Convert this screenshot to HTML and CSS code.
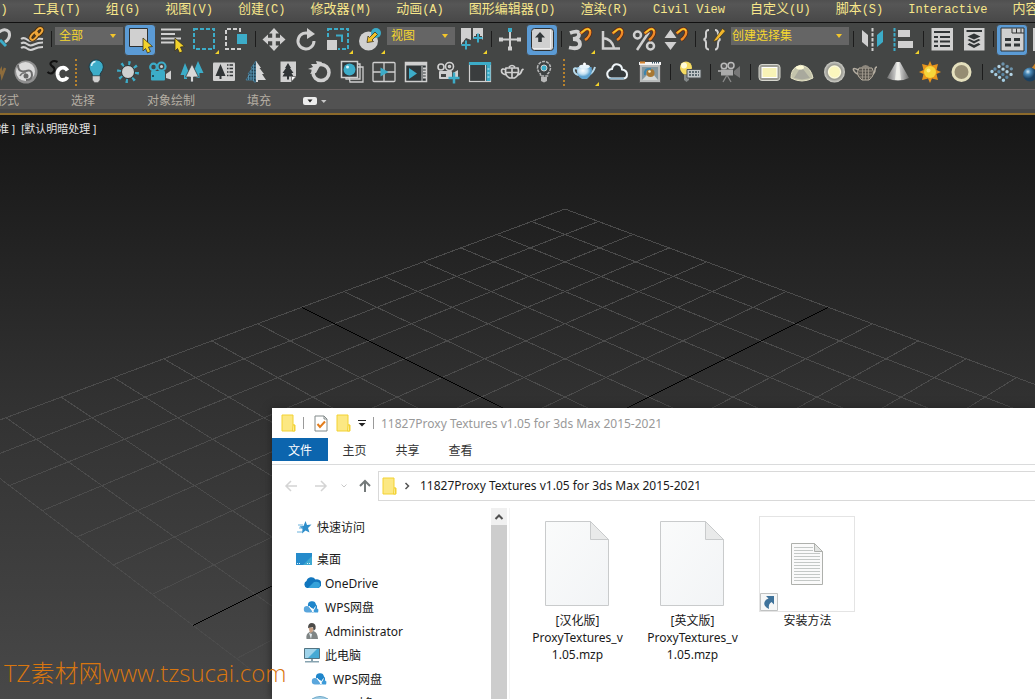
FILE: index.html
```html
<!DOCTYPE html>
<html lang="zh-CN">
<head>
<meta charset="utf-8">
<title>3ds Max</title>
<link rel="stylesheet" href="styles.css">
</head>
<body>
<svg class="defs" aria-hidden="true">
  <defs>
    <symbol id="flyout" viewBox="0 0 32 32"><path d="M31 26v4h-4z" fill="#f2d22b"/></symbol>
    <symbol id="cursor" viewBox="0 0 32 32"><path d="M19 14l9.500 8.500-4 .5 2 4.500-3 1.500-2-4.500-2.500 2.500z" fill="#f2d22b" stroke="#3a3420" stroke-width=".8"/></symbol>
    <symbol id="magnet" viewBox="0 0 32 32"><path d="M16.500 9.500L21.500 5.500Q25 4 26 7T23 14.500L21 16" fill="none" stroke="#5a2a12" stroke-width="4"/><path d="M16.500 9.500L21.500 5.500Q25 4 26 7T23 14.500L21 16" fill="none" stroke="#f08a28" stroke-width="2.400"/><path d="M17.500 8.500L21.500 5.500Q25 4 26 7" fill="none" stroke="#f2d22b" stroke-width="1.200"/></symbol>
    <symbol id="folder" viewBox="0 0 16 18"><path d="M1 1h11v10h2v6H1z" fill="#fce883" stroke="#f3d233"/><path d="M12 11h1.500v6H11.500z" fill="#fdf0a8" stroke="#f3d233"/></symbol>
    <symbol id="wps" viewBox="0 0 18 14"><path d="M5 6a4 4 0 0 1 8-1.500 3.500 3.500 0 0 1-.5 5.500z" fill="#1f86cb"/><path d="M4 12.500a3.200 3.200 0 0 1 0-6.400q2 0 3 2l3 4.400z" fill="#5aa6dc"/><path d="M9 12.500l3-5a4 3.500 0 0 1 3 5z" fill="#3c9ad8"/><path d="M6 6l5 6.500M12.500 6.500L9 12.500" stroke="#fff"/></symbol>
    <symbol id="paper" viewBox="0 0 64 86"><path d="M.5.500h45l18 18v66H.5z" fill="url(#paperfill)" stroke="#c9cbcc"/><path d="M45.500.500v18h18z" fill="#e9eaea" stroke="#c9cbcc"/></symbol>
    <linearGradient id="paperfill" x1="0" y1="0" x2="1" y2="1"><stop offset="0" stop-color="#fafbfb"/><stop offset="1" stop-color="#f2f4f6"/></linearGradient>
    <radialGradient id="bluepot" cx=".4" cy=".3"><stop offset="0" stop-color="#fff"/><stop offset=".6" stop-color="#c4e1f2"/><stop offset="1" stop-color="#5fa3d0"/></radialGradient>
    <radialGradient id="glow"><stop offset=".5" stop-color="#fdf9c4"/><stop offset=".7" stop-color="#9a9a94"/><stop offset="1" stop-color="#cfcfc8"/></radialGradient>
    <linearGradient id="cone"><stop offset="0" stop-color="#777"/><stop offset=".5" stop-color="#fff"/><stop offset="1" stop-color="#707070"/></linearGradient>
    <radialGradient id="orb" cx=".35" cy=".3"><stop offset="0" stop-color="#d4ecfa"/><stop offset=".4" stop-color="#4a8ab8"/><stop offset="1" stop-color="#1c405f"/></radialGradient>
  </defs>
</svg>

<header class="app-head">
  <nav class="menubar" aria-label="主菜单">
    <button class="menu menu-first">)</button>
    <button class="menu"><span class="cn">工具</span>(T)</button>
    <button class="menu"><span class="cn">组</span>(G)</button>
    <button class="menu"><span class="cn">视图</span>(V)</button>
    <button class="menu"><span class="cn">创建</span>(C)</button>
    <button class="menu"><span class="cn">修改器</span>(M)</button>
    <button class="menu"><span class="cn">动画</span>(A)</button>
    <button class="menu"><span class="cn">图形编辑器</span>(D)</button>
    <button class="menu"><span class="cn">渲染</span>(R)</button>
    <button class="menu">Civil View</button>
    <button class="menu"><span class="cn">自定义</span>(U)</button>
    <button class="menu"><span class="cn">脚本</span>(S)</button>
    <button class="menu">Interactive</button>
    <button class="menu"><span class="cn">内容</span></button>
  </nav>

  <div class="toolbars">
    <div class="toolbar toolbar-main">
      <button class="tool" aria-label="断开链接"><svg viewBox="0 0 32 32"><path d="M14 9q7-6 11-1 2 6-4 10" fill="none" stroke="#d0d0d0" stroke-width="3"/><path d="M16 16l6 6" stroke="#3cacc8" stroke-width="3"/></svg></button>
      <button class="tool" aria-label="绑定到空间扭曲"><svg viewBox="0 0 32 32"><g fill="none" stroke="#d0d0d0" stroke-width="2"><path d="M5 15q3-2 6 .5t7 .5 9-1"/><path d="M5 19.500q3-2 6 .5t7 .5 9-2"/><path d="M5 24q3-2 6 .5t7 .5 9-2"/></g><g fill="none" stroke="#4a3010" stroke-width="4"><ellipse cx="18" cy="12" rx="4.500" ry="2.500" transform="rotate(-48 18 12)"/><ellipse cx="23" cy="7.500" rx="4" ry="2.500" transform="rotate(-48 23 7.500)"/></g><g fill="none" stroke="#f0a83a" stroke-width="2"><ellipse cx="18" cy="12" rx="4.500" ry="2.500" transform="rotate(-48 18 12)"/><ellipse cx="23" cy="7.500" rx="4" ry="2.500" transform="rotate(-48 23 7.500)"/></g></svg></button>
      <span class="sep"></span>
      <label class="drop drop-s"><select aria-label="选择过滤器"><option>全部</option></select></label>
      <button class="tool on" aria-label="选择对象"><svg viewBox="0 0 32 32"><path d="M5.500 4.500h18v18h-18z" fill="#d0d0d0" stroke="#2e3030"/><use href="#cursor"/></svg></button>
      <button class="tool" aria-label="按名称选择"><svg viewBox="0 0 32 32"><path d="M5 5.500h20M5 10h14M5 14.500h20M5 18.500h13" stroke="#d0d0d0" stroke-width="2"/><use href="#cursor"/></svg></button>
      <button class="tool" aria-label="矩形选择区域"><svg viewBox="0 0 32 32"><path d="M6 5h20v20H6z" fill="none" stroke="#3cacc8" stroke-width="2" stroke-dasharray="4 2"/><use href="#flyout"/></svg></button>
      <button class="tool" aria-label="窗口交叉"><svg viewBox="0 0 32 32"><path d="M20 8V5H6v20h14v-3" fill="none" stroke="#d0d0d0" stroke-width="2" stroke-dasharray="4 2"/><path d="M17 10h10v10H17z" fill="#3cacc8"/></svg></button>
      <span class="sep"></span>
      <button class="tool" aria-label="移动"><svg viewBox="0 0 32 32"><path d="M16 4l5 5.500h-3.200v4.200H22V10.500l5.500 5-5.500 5v-3.200h-4.200v4.200H21l-5 5.500-5-5.500h3.200v-4.200H10v3.200l-5.500-5 5.500-5v3.200h4.200V9.500H11z" fill="#d0d0d0"/></svg></button>
      <button class="tool" aria-label="旋转"><svg viewBox="0 0 32 32"><path d="M20 10a8 8 0 1 0 4 7" fill="none" stroke="#d0d0d0" stroke-width="3"/><path d="M17 4l8 6-8 5z" fill="#d0d0d0"/></svg></button>
      <button class="tool" aria-label="缩放"><svg viewBox="0 0 32 32"><path d="M6 5h20v20H6z" fill="none" stroke="#3cacc8" stroke-width="2" stroke-dasharray="4 2"/><path d="M4 15h12v12H4z" fill="#444645"/><path d="M5 16h10v10H5z" fill="#d0d0d0"/><path d="M14 11.500h6V18" fill="none" stroke="#3cacc8" stroke-width="2"/><use href="#flyout"/></svg></button>
      <button class="tool" aria-label="放置"><svg viewBox="0 0 32 32"><circle cx="14.500" cy="17" r="9.500" fill="#d0d0d0"/><circle cx="22" cy="9" r="5" fill="#3cacc8"/><path d="M21 8l2.500 2.500-5.500 5.500 1.500 1.500-6.500 1 1-6.500 1.500 1.500z" fill="#f2c22b" stroke="#3a3420" stroke-width=".8"/><use href="#flyout"/></svg></button>
      <label class="drop drop-s"><select aria-label="参考坐标系"><option>视图</option></select></label>
      <button class="tool" aria-label="使用轴点中心"><svg viewBox="0 0 32 32"><path d="M5 4h10v12l-5-2-5 7zM17 4h10v12l-5-6-5 5z" fill="#d0d0d0"/><path d="M10 16v9M6 20.500h8M22 10v8M18 14h8" stroke="#444645" stroke-width="4"/><path d="M10 16.500v9M5.500 21h9M22 9.500v9M17.500 14h9" stroke="#3cacc8" stroke-width="2"/><use href="#flyout"/></svg></button>
      <span class="sep"></span>
      <button class="tool" aria-label="选择并操纵"><svg viewBox="0 0 32 32"><path d="M16 7v18M6 15.500h20" stroke="#d0d0d0" stroke-width="2"/><path d="M5 13.500h4v4H5zM23 13.500h4v4h-4zM14 22.500h4v4h-4z" fill="#d0d0d0"/><path d="M14 4h4v4h-4z" fill="#3cacc8"/></svg></button>
      <button class="tool on" aria-label="键盘快捷键覆盖"><svg viewBox="0 0 32 32"><rect x="5.500" y="4.500" width="22" height="22" rx="3" fill="#d0d0d0" stroke="#2e3030"/><path d="M24.500 6v18.500H7" fill="none" stroke="#f0f0f0"/><path d="M14 8l5 5.500h-3.200V18h-3.600v-4.500H9z" fill="#33383a"/></svg></button>
      <span class="sep"></span>
      <button class="tool" aria-label="捕捉开关"><svg viewBox="0 0 32 32"><path d="M6 9q9-3.500 9 1.500 0 4-6 4.500 7 0 7 5 0 6-11 3.500" fill="none" stroke="#d0d0d0" stroke-width="3.800"/><use href="#magnet"/><use href="#flyout"/></svg></button>
      <button class="tool" aria-label="角度捕捉"><svg viewBox="0 0 32 32"><path d="M7 7v17.500h17M7 14q9 1 11 10" fill="none" stroke="#d0d0d0" stroke-width="2.500"/><use href="#magnet"/></svg></button>
      <button class="tool" aria-label="百分比捕捉"><svg viewBox="0 0 32 32"><g fill="none" stroke="#d0d0d0" stroke-width="2.500"><circle cx="9.500" cy="11" r="3.500"/><circle cx="22.500" cy="22" r="3.500"/><path d="M9 26L21 8"/></g><use href="#magnet"/></svg></button>
      <button class="tool" aria-label="微调器捕捉"><svg viewBox="0 0 32 32"><path d="M10.500 5.500l6 8.500h-12zM4.500 18h12l-6 8z" fill="#d0d0d0"/><use href="#magnet"/></svg></button>
      <span class="sep"></span>
      <button class="tool" aria-label="编辑命名选择集"><svg viewBox="0 0 32 32"><path d="M11 6q-3.500 0-3 4 .5 5-2.500 5.500 3 .5 2.500 5-.5 5 3 5M17 6q3 0 3 4 0 5 2.500 5.500-2.500.5-2.500 5 0 5-3 5" fill="none" stroke="#d0d0d0" stroke-width="2"/><path d="M16 16l8.500-11.500 3 2.500-8.500 9.500-3.500 1z" fill="#f2b62b" stroke="#3a3420" stroke-width=".7"/></svg></button>
      <label class="drop drop-l"><select aria-label="命名选择集"><option>创建选择集</option></select></label>
      <span class="sep"></span>
      <button class="tool" aria-label="镜像"><svg viewBox="0 0 32 32"><path d="M6 6l6 5v12l-6-5z" fill="#d0d0d0"/><path d="M16.500 4v23" stroke="#d0d0d0" stroke-width="2" stroke-dasharray="3.500 1.500"/><path d="M27 6l-6 5v12l6-5z" fill="#3cacc8"/></svg></button>
      <button class="tool" aria-label="对齐"><svg viewBox="0 0 32 32"><path d="M6.500 4v23" stroke="#3cacc8" stroke-width="2" stroke-dasharray="3.500 1.500"/><path d="M10 6h12v7H10zM10 17h15v7H10z" fill="#d0d0d0"/><use href="#flyout"/></svg></button>
      <span class="sep"></span>
      <button class="tool" aria-label="场景资源管理器"><svg viewBox="0 0 32 32"><path d="M5.500 4h21.500v22.500H5.500z" fill="#d0d0d0"/><path d="M8 8h16M8 13h4M14 13h10M8 17.500h4M14 17.500h10M8 22h4M14 22h10" stroke="#303436" stroke-width="2.200"/></svg></button>
      <button class="tool" aria-label="层资源管理器"><svg viewBox="0 0 32 32"><path d="M6 4h20.500v22.500H6z" fill="#d0d0d0"/><path d="M8.500 7h15.500" stroke="#303436" stroke-width="2"/><path d="M16 9.500l6.500 3-6.500 3-6.500-3z M9.500 16l2-1 4.500 2 4.500-2 2 1-6.500 3.500zM9.500 20.500l2-1.500 4.500 2 4.500-2 2 1.500-6.500 3.500z" fill="#303436"/></svg></button>
      <span class="sep"></span>
      <button class="tool on" aria-label="切换功能区"><svg viewBox="0 0 32 32"><path d="M5 4h23v23H5z" fill="#d0d0d0" stroke="#2e3030"/><path d="M16 4.500V9h12M20.500 4.500V9M25 4.500V9" fill="none" stroke="#2e3030"/><path d="M9 15.500h6M18 15.500h6M9 21h6M18 21h6" stroke="#303436" stroke-width="3"/></svg></button>
      <button class="tool" aria-label="曲线编辑器"><svg viewBox="0 0 32 32"><path d="M5 4h22v23H5z" fill="#d0d0d0"/></svg></button>
    </div>

    <div class="toolbar toolbar-extra">
      <button class="tool" aria-label="工具 W"><svg viewBox="0 0 32 32"><path d="M20 12l2 8 3-6 1 6 3-8" fill="none" stroke="#8d6c3c" stroke-width="2.500"/></svg></button>
      <button class="tool" aria-label="漩涡"><svg viewBox="0 0 32 32"><circle cx="18" cy="16" r="11.500" fill="#8f8f8f"/><circle cx="17.500" cy="15.500" r="9.500" fill="#dadada"/><path d="M10 9q0 8 8 6 6-2 6 4 0 5-6 5" fill="none" stroke="#6c6c6c" stroke-width="2"/><path d="M12 20q2-4 6-3" fill="none" stroke="#777" stroke-width="1.500"/><circle cx="18" cy="20" r="2.500" fill="#666"/></svg></button>
      <button class="tool" aria-label="SC 脚本"><svg viewBox="0 0 32 32"><path d="M17.500 6q-3.500-2-6 0t1 4.500 1 5.500-6 0" fill="none" stroke="#111" stroke-width="2.200"/><path d="M27.500 14.500q-2.500-4-6.500-2.500-4 2-3.500 6.500 1 5.500 5 5.500 3.500 0 5-3" fill="none" stroke="#fff" stroke-width="3.800"/></svg></button>
      <span class="dots"></span>
      <button class="tool" aria-label="灯光"><svg viewBox="0 0 32 32"><path d="M9 11a7.200 7.200 0 0 1 14.400 0q0 3-3.200 7v2h-8v-2Q9 14 9 11z" fill="#3cacc8" stroke="#1f3c46"/><path d="M11.500 10q.5-4 4-4.500" fill="none" stroke="#d9f3fa" stroke-width="1.500"/><path d="M12.500 20h7.500v4l-2 2.500h-3.500l-2-2.500z" fill="#d0d0d0" stroke="#555" stroke-width=".5"/></svg></button>
      <button class="tool" aria-label="太阳光"><svg viewBox="0 0 32 32"><circle cx="16" cy="16" r="9" fill="none" stroke="#3cacc8" stroke-width="4" stroke-dasharray="2.200 4.870"/><circle cx="16" cy="16" r="6.500" fill="#d0d0d0" stroke="#2c3436"/></svg></button>
      <button class="tool" aria-label="摄影机"><svg viewBox="0 0 32 32"><g fill="#444645" stroke="#3cacc8" stroke-width="2.200"><circle cx="9.500" cy="11" r="3.300"/><circle cx="17.500" cy="10.500" r="4"/></g><circle cx="17.500" cy="10.500" r="1.500" fill="#d0d0d0"/><rect x="7" y="15" width="14" height="9.500" rx="1" fill="#3cacc8"/><path d="M8 19h2v2H8z" fill="#1e5060"/><path d="M22 18l5-3.500v9L22 22z" fill="#d0d0d0"/></svg></button>
      <button class="tool" aria-label="森林"><svg viewBox="0 0 32 32"><path d="M9 7l5 12H11v4H8v-4H4.500zM22 5l5.500 12h-4v5h-3v-5H17z" fill="#3cacc8"/><path d="M16 8l6.500 13H17.500v5h-3v-5H9.500z" fill="#d8d8d8" stroke="#3a4042" stroke-width=".8"/></svg></button>
      <button class="tool" aria-label="树库"><svg viewBox="0 0 32 32"><rect x="5" y="6.500" width="22" height="18.500" rx="1" fill="#d0d0d0"/><path d="M12.500 8l5 12h-4v3h-2v-3h-4z" fill="#303436"/><path d="M19 9h6M19 12.500h6M19 16h6M19 19.500h6" stroke="#303436" stroke-width="1.500"/><path d="M21 8v13" stroke="#d0d0d0"/></svg></button>
      <button class="tool" aria-label="树网格"><svg viewBox="0 0 32 32"><path d="M16 5l-5 7h1.500L8 18h2l-4 6h8v2h2z" fill="#213d4c" stroke="#4d86a3" stroke-width=".8"/><path d="M13.500 9v16M11 14v10M8.500 19v5M8 22h8M9 19h7M10 16h6M12 13h4M13 10h3" stroke="#5c9cbb" stroke-width=".8"/><path d="M16 5l5 7h-1.500l4.500 6h-2l4 6h-8v2h-2z" fill="#d8d8d8"/></svg></button>
      <button class="tool" aria-label="树卡片"><svg viewBox="0 0 32 32"><path d="M8.500 5.500h15.500v15l-5 5.500H8.500z" fill="#d0d0d0"/><path d="M16 7l3 5h-1l3.500 5h-2l2 3.500h-4.500v3h-2v-3h-4.500l2-3.500h-2L14 12h-1z" fill="#303436"/><path d="M24 20.500h-4.500v5z" fill="#fff" stroke="#555" stroke-width=".7"/></svg></button>
      <button class="tool" aria-label="环形散布"><svg viewBox="0 0 32 32"><circle cx="17" cy="16.500" r="8" fill="none" stroke="#d0d0d0" stroke-width="3.500"/><path d="M18 6l-6-1 1 3-6 0 2 3-5 2 5 1-3 4 6-1z" fill="#d0d0d0"/></svg></button>
      <button class="tool" aria-label="材质库"><svg viewBox="0 0 32 32"><path d="M11 11h16v15H14zM8 8h16v15H10z" fill="#444645" stroke="#d0d0d0" stroke-width="1.300"/><path d="M5.500 5.500h16v16h-16z" fill="#303638" stroke="#d0d0d0" stroke-width="1.500"/><circle cx="13.500" cy="13.500" r="6" fill="#3cacc8"/><circle cx="11.500" cy="11" r="1.500" fill="#d9f3fa"/></svg></button>
      <button class="tool" aria-label="视口播放"><svg viewBox="0 0 32 32"><rect x="5" y="6.500" width="22" height="19" rx="1" fill="none" stroke="#d0d0d0" stroke-width="1.300"/><path d="M16 7v18M5 16h22" stroke="#d0d0d0" stroke-width="1.300"/><path d="M12.500 11.500l8 4.500-8 4.500z" fill="#3cacc8"/></svg></button>
      <button class="tool" aria-label="渲染播放"><svg viewBox="0 0 32 32"><rect x="5.500" y="6.500" width="21" height="19" fill="#303638" stroke="#d0d0d0" stroke-width="1.500"/><path d="M5 8h22" stroke="#d0d0d0" stroke-width="3"/><path d="M22 10v15" stroke="#d0d0d0"/><path d="M23 12.500h3M23 15.500h3M23 18.500h3M23 21.500h3" stroke="#d0d0d0" stroke-width="2"/><path d="M9 12l8 5.500L9 23z" fill="#3cacc8"/></svg></button>
      <button class="tool" aria-label="添加摄影机"><svg viewBox="0 0 32 32"><g fill="#444645" stroke="#d0d0d0" stroke-width="1.600"><circle cx="9" cy="11" r="3"/><circle cx="17.500" cy="10.500" r="4"/><circle cx="17.500" cy="10.500" r="1"/></g><rect x="7" y="15" width="13" height="8" rx="1" fill="#d0d0d0"/><path d="M9 18h5v3H9z" fill="#444645"/><path d="M21 17l5-3v7h-5z" fill="#d0d0d0"/><path d="M22 16.500v11M16.500 22h11" stroke="#3cacc8" stroke-width="2.500"/></svg></button>
      <button class="tool" aria-label="面板"><svg viewBox="0 0 32 32"><rect x="5.500" y="7" width="21" height="18.500" fill="#3a3d3e" stroke="#d0d0d0" stroke-width="1.200"/><path d="M5 7.500h22" stroke="#3cacc8" stroke-width="3"/><path d="M21.500 9v16" stroke="#d0d0d0"/><path d="M24.500 9v16" stroke="#3cacc8" stroke-width="4"/><path d="M23.500 13h2M23.500 17h2M23.500 21h2" stroke="#d0f0f8"/></svg></button>
      <button class="tool" aria-label="线框茶壶"><svg viewBox="0 0 32 32"><g fill="none" stroke="#d0d0d0" stroke-width="1.700"><path d="M10 12h12q2 7-3.500 10h-5q-5.500-3-3.500-10zM13 11q3-3 6 0M16 12v10M9.500 13.500q-4-1.500-4 1.500t5 4M22 19q3-1 4-5l1.500-1M10 16.500h12"/></g></svg></button>
      <button class="tool" aria-label="灯泡设置"><svg viewBox="0 0 32 32"><path d="M9.500 12a6.500 6.500 0 0 1 13 0q0 3-3 6v2h-7v-2q-3-3-3-6z" fill="#3d4142" stroke="#b8b8b8" stroke-width="1.500" stroke-dasharray="3 1"/><circle cx="16" cy="12" r="3" fill="#3cacc8" stroke="#d0d0d0"/><path d="M13 21h6v4l-3 1.500L13 25z" fill="#b8b8b8"/></svg></button>
      <span class="dots"></span>
      <button class="tool" aria-label="渲染茶壶"><svg viewBox="0 0 32 32"><path d="M10 13q-5-2-4 2t6 4M22 18q3-1 5-7" fill="none" stroke="#b7d9ea" stroke-width="2"/><path d="M9.500 11h14q2 7-4.500 12h-5q-7-4-4.500-12z" fill="url(#bluepot)"/><ellipse cx="16.500" cy="10.500" rx="5.500" ry="2" fill="#e7f4fb"/><circle cx="16.500" cy="8" r="1.500" fill="#fff"/><use href="#flyout"/></svg></button>
      <button class="tool" aria-label="云渲染"><svg viewBox="0 0 32 32"><path d="M11 22.500a4.500 4.500 0 0 1-2-8q1-1.500 3-1.500 1-5.500 6-4.500 4 1 4 5 5 1 5 5t-4 4z" fill="#34393b" stroke="#eef4f7" stroke-width="2"/><path d="M9 22.500h15" stroke="#8db7d0" stroke-width="1.500"/></svg></button>
      <button class="tool" aria-label="渲染帧窗口"><svg viewBox="0 0 32 32"><path d="M7.500 7h21v19.500h-21z" fill="#b9bcbc" stroke="#555"/><path d="M7 7.500h22" stroke="#f4f4f4" stroke-width="3"/><path d="M8 6.500h5" stroke="#d98834" stroke-width="2"/><path d="M20 6.500h8" stroke="#3b5464" stroke-width="2" stroke-dasharray="1 1"/><path d="M10 11h16v13H10z" fill="#84979f"/><path d="M10 24l6-6h5l5 6z" fill="#d5d8d5"/><circle cx="18.500" cy="17" r="4" fill="#a87832"/><path d="M13 19q-1-7 6-6" fill="none" stroke="#3d85ad" stroke-width="2"/><circle cx="17.500" cy="15.500" r="1.300" fill="#fff2c8"/></svg></button>
      <span class="sep2"></span>
      <button class="tool" aria-label="灯光列表"><svg viewBox="0 0 32 32"><path d="M8 11.500a6 6 0 0 1 12 0q0 4-3 7h-5q-4-3-4-7z" fill="#f6dc62"/><circle cx="12" cy="9.500" r="3" fill="#fffbd8"/><path d="M12 19h5v5l-2.500 2-2.500-2z" fill="#858a8a"/><path d="M15 13.500h14v8.500H15z" fill="#c2c8ca" stroke="#4c5153"/><path d="M17 16h10M17 19h10" stroke="#3c4c54" stroke-width="1.300" stroke-dasharray="2 1"/></svg></button>
      <span class="sep2"></span>
      <button class="tool" aria-label="摄像机列表"><svg viewBox="0 0 32 32"><g fill="#555" stroke="#bbb" stroke-width="1.500"><circle cx="12" cy="10" r="2.800"/><circle cx="19" cy="9.500" r="3"/></g><path d="M9 13.500h12v6H9z" fill="#aaa"/><path d="M6 14h3v2H6z" fill="#999"/><path d="M22 15l6-5v12l-6-4z" fill="#777"/><path d="M15 19l-4 7M15 19l4 7" stroke="#8a8a8a" stroke-width="1.300"/></svg></button>
      <span class="sep2"></span>
      <button class="tool" aria-label="平面光"><svg viewBox="0 0 32 32"><rect x="7" y="8.500" width="21" height="16" rx="3" fill="#9c9c94" stroke="#d6d6ce"/><rect x="10" y="11.500" width="15" height="10" fill="#f8f3b6" stroke="#fff"/></svg></button>
      <button class="tool" aria-label="穹顶光"><svg viewBox="0 0 32 32"><path d="M7 22q0-8 5-11t8-1q7 2 9 12-11 6-22 0z" fill="#c4c4ac" stroke="#e9e6c8"/><path d="M10 22l5-8 4-1 7 9-8 1.500z" fill="#a9a99d"/><ellipse cx="16" cy="11.500" rx="4" ry="2" fill="#fffbd6"/></svg></button>
      <button class="tool" aria-label="球光"><svg viewBox="0 0 32 32"><circle cx="18.500" cy="16" r="10.500" fill="url(#glow)"/><circle cx="18.500" cy="16" r="6" fill="#fbf6bd" stroke="#fffde8"/></svg></button>
      <button class="tool" aria-label="网格光"><svg viewBox="0 0 32 32"><path d="M10.500 14q-6-3-5 0t6 5M24 19q3-2 3-5t2-3" fill="none" stroke="#b5aea2" stroke-width="1.500"/><path d="M11 12h13q4 7-3 12h-7q-7-5-3-12z" fill="#57534d" stroke="#b8b0a1"/><path d="M12.500 12q5-6 10 0" fill="#8e887e"/><path d="M17.500 12v12M14.500 12v12M20.500 12v12M11 15h13M10.500 18h14M11.500 21h12" stroke="#a39c8f" stroke-width=".8"/></svg></button>
      <button class="tool" aria-label="聚光"><svg viewBox="0 0 32 32"><path d="M16 6h4l9 16q-11 5-22 0z" fill="url(#cone)" opacity=".85"/><path d="M17 6h2l2 18h-6z" fill="#f4f4ee" opacity=".8"/></svg></button>
      <button class="tool" aria-label="太阳"><svg viewBox="0 0 32 32"><path d="M18 5l2 4.500L26 8l-1.500 6 4.500 2-4.500 2 1.500 6-6-1.500L18 27l-2-4.500L10 24l1.500-6L7 16l4.500-2L10 8l6 1.500z" fill="#e8951c"/><circle cx="18" cy="16" r="6" fill="#f7d63a"/><circle cx="16.500" cy="14.500" r="2" fill="#ffee80"/></svg></button>
      <button class="tool" aria-label="圆盘光"><svg viewBox="0 0 32 32"><circle cx="17.500" cy="16" r="8.500" fill="#958c73" stroke="#e4dfbd" stroke-width="3"/></svg></button>
      <span class="sep2"></span>
      <button class="tool" aria-label="粒子"><svg viewBox="0 0 32 32"><g stroke-width="3.400" stroke-linecap="round" stroke-dasharray="0 4.800"><path d="M19 8l12 7" stroke="#6d93ac"/><path d="M15 10.500l13 8.500" stroke="#b5d5e6"/><path d="M11 13l13 9" stroke="#5c86a3"/><path d="M8 15.500l13 10" stroke="#a5cde2"/></g></svg></button>
      <button class="tool" aria-label="球体"><svg viewBox="0 0 32 32"><path d="M15 13l5-7 6 5-5 6z" fill="#c9842a"/><circle cx="14" cy="18.500" r="7" fill="url(#orb)"/></svg></button>
    </div>
  </div>

  <div class="ribbon">
    <button class="tab tab-a">形式</button>
    <button class="tab tab-b">选择</button>
    <button class="tab tab-b">对象绘制</button>
    <button class="tab tab-c">填充</button>
    <button class="ribbon-toggle" aria-label="最小化功能区"><svg viewBox="0 0 26 8"><rect width="14" height="8" rx="2" fill="#ececec"/><path d="M4.500 2.500h5L7 5.500z" fill="#222"/><path d="M18 3h5.500l-2.700 3z" fill="#c8c8c8"/></svg></button>
  </div>
</header>

<main class="viewport">
  <svg class="floor" id="floor" aria-hidden="true"></svg>
  <p class="view-label">准 ] <span>[默认明暗处理 ]</span></p>

  <section class="explorer" aria-label="11827Proxy Textures v1.05 for 3ds Max 2015-2021">
    <div class="titlebar">
      <svg class="folder" viewBox="0 0 16 18"><use href="#folder"/></svg>
      <span class="rule rule-a"></span>
      <button class="plain" aria-label="属性"><svg class="check" viewBox="0 0 14 17"><path d="M1 1h9l3 3v12H1z" fill="#fff" stroke="#828a8a"/><path d="M10 1v3h3" fill="none" stroke="#828a8a"/><path d="M3.500 9l2.500 3 5-5.500" fill="none" stroke="#e37d1c" stroke-width="2"/></svg></button>
      <button class="plain" aria-label="新建文件夹"><svg class="folder" viewBox="0 0 16 18"><use href="#folder"/></svg></button>
      <button class="plain" aria-label="自定义快速访问工具栏"><svg class="more" viewBox="0 0 8 8"><path d="M0 1.500h8" stroke="#222"/><path d="M.5 4h7L4 7.500z" fill="#222"/></svg></button>
      <span class="rule"></span>
      <h1 class="win-title">11827Proxy Textures v1.05 for 3ds Max 2015-2021</h1>
    </div>
    <nav class="win-tabs" aria-label="功能区">
      <button class="win-tab file">文件</button>
      <button class="win-tab">主页</button>
      <button class="win-tab">共享</button>
      <button class="win-tab">查看</button>
    </nav>
    <div class="nav-row">
      <button class="plain" aria-label="后退"><svg viewBox="0 0 14 14" class="arrow"><path d="M13 7H2M7 2L2 7l5 5" fill="none" stroke="#d4d4d4" stroke-width="1.500"/></svg></button>
      <button class="plain" aria-label="前进"><svg viewBox="0 0 14 14" class="arrow"><path d="M1 7h11M7 2l5 5-5 5" fill="none" stroke="#d4d4d4" stroke-width="1.500"/></svg></button>
      <button class="plain recent" aria-label="最近位置"><svg viewBox="0 0 6 6"><path d="M.5 1.500L3 4l2.500-2.500" fill="none" stroke="#c8c8c8"/></svg></button>
      <button class="plain" aria-label="上移"><svg viewBox="0 0 14 14" class="arrow"><path d="M7 13V2M2 7l5-5 5 5" fill="none" stroke="#747a7a" stroke-width="2"/></svg></button>
      <div class="address">
        <svg class="folder" viewBox="0 0 16 18"><use href="#folder"/></svg>
        <svg class="crumb" viewBox="0 0 6 8"><path d="M1.500 1l3 3-3 3" fill="none" stroke="#555" stroke-width="1.500"/></svg>
        <button class="plain path">11827Proxy Textures v1.05 for 3ds Max 2015-2021</button>
      </div>
    </div>
    <div class="win-body">
      <ul class="tree">
        <li class="top quick"><svg viewBox="0 0 18 16"><path d="M10.500 2l1.500 4 4.500-.5-3.500 3.500 1.500 4.500-4-2-3.500 3 .5-4.500-3-2.500 4-.5z" fill="#2d8dca"/><path d="M3 6h5M4 9h4M2 13h5" stroke="#6bb2dc"/></svg>快速访问</li>
        <li class="top"><svg viewBox="0 0 18 16"><path d="M1 2h16v12H1z" fill="#258bcb"/><path d="M17 5v9H8z" fill="#3fa9d2"/><path d="M2 12.500h4M12 12.500h4" stroke="#dff2fb" stroke-dasharray="1 1"/></svg>桌面</li>
        <li><svg viewBox="0 0 18 16"><path d="M4 13a3.800 3.800 0 0 1-.5-7 5 5 0 0 1 9-1.500 4 4 0 0 1 3 8.500z" fill="#1176be"/><path d="M5 13l6-6q6-1 6 3 0 3-3 3z" fill="#35a2da"/></svg>OneDrive</li>
        <li><svg viewBox="0 0 18 14"><use href="#wps"/></svg>WPS网盘</li>
        <li><svg viewBox="0 0 18 16"><path d="M3.500 16q-1-5 3-7l4-1q4 1 4.500 8z" fill="#7f8585"/><path d="M5.500 4.500h5l-1 4.500-2.500 1z" fill="#c9a184"/><path d="M5 5q0-5 4-5 4.500.5 3.500 6L10.500 8 10 4z" fill="#4c4b49"/><path d="M6 10l2 6 1-5z" fill="#e4eef2"/></svg>Administrator</li>
        <li><svg viewBox="0 0 18 16"><path d="M1.500 1.500h15v10h-15z" fill="#45a9d4" stroke="#537482"/><path d="M2 2h12L5 11H2z" fill="#9fd3ea"/><path d="M8 12h2v2H8zM2 14h14v1.500H2z" fill="#87a3b0"/></svg>此电脑</li>
        <li class="deep"><svg viewBox="0 0 18 14"><use href="#wps"/></svg>WPS网盘</li>
        <li class="deep"><svg viewBox="0 0 18 16"><path d="M1 4q8-5 16 0v9H1z" fill="#a4cfe6" stroke="#6da8c8"/></svg>3D 对象</li>
      </ul>
      <div class="scroll" aria-hidden="true"><span class="scroll-up"><svg viewBox="0 0 10 8"><path d="M1.500 6L5 2.500 8.500 6" fill="none" stroke="#505050" stroke-width="2"/></svg></span></div>
      <ul class="files">
        <li><div class="thumb"><svg class="doc" viewBox="0 0 64 86"><use href="#paper"/></svg></div><span>[汉化版]<br>ProxyTextures_v<br>1.05.mzp</span></li>
        <li><div class="thumb"><svg class="doc" viewBox="0 0 64 86"><use href="#paper"/></svg></div><span>[英文版]<br>ProxyTextures_v<br>1.05.mzp</span></li>
        <li><div class="thumb framed"><svg class="note" viewBox="0 0 32 42"><path d="M.5.500h23l8 8v33H.5z" fill="#fafafa" stroke="#aeb0ac"/><path d="M23.500.500v8h8z" fill="#e2e4e2" stroke="#aeb0ac"/><path d="M3 4.500h19M3 7.500h19M3 10.500h26M3 13.500h26M3 16.500h26M3 19.500h26M3 22.500h26M3 25.500h26M3 28.500h26M3 31.500h26M3 34.500h26M3 37.500h26" stroke="#c4c8c6"/></svg><svg class="shortcut" viewBox="0 0 18 18"><path d="M.5.500h17v17H.5z" fill="#f6f7f7" stroke="#c0c2c2"/><path d="M6 3h8v8.500l-2.500-2.500Q8 11 9 16 3 13 4.500 9q1-3 4-3.500z" fill="#3f739b"/></svg></div><span>安装方法</span></li>
      </ul>
    </div>
  </section>

  <p class="watermark">TZ素材网www.tzsucai.com</p>
</main>
<script src="floor.js"></script>
</body>
</html>
```
FILE: styles.css
```css
* { box-sizing: border-box; }

html, body { height: 100%; }

body {
  margin: 0;
  display: flex;
  flex-direction: column;
  overflow: hidden;
  font-family: "Open Sans", "Noto Sans CJK SC", sans-serif;
  font-size: 12px;
  background: #171717;
}

button {
  margin: 0;
  padding: 0;
  border: 0;
  background: none;
  color: inherit;
  font: inherit;
  white-space: nowrap;
  flex: none;
}

svg { display: block; flex: none; }
.defs { position: absolute; width: 0; height: 0; }
ul, p, h1 { margin: 0; padding: 0; list-style: none; }

.app-head { flex: none; }

/* Menu bar */
.menubar {
  display: flex;
  gap: 25px;
  height: 23px;
  align-items: flex-start;
  overflow: hidden;
  background: linear-gradient(#505050, #565656 20%, #484848);
  border-bottom: 1px solid #111;
  color: #f7e68a;
  font-family: "Liberation Mono", "Noto Sans CJK SC", monospace;
  line-height: 20px;
}
.menu-first { width: 8px; }
.cn { font-size: 13px; }

/* Toolbars */
.toolbars {
  background: #444645;
  padding: 1px 0;
}
.toolbar {
  display: flex;
  height: 32px;
  overflow: hidden;
}
.toolbar-main > :first-child { margin-left: -16px; }
.toolbar-extra > :first-child { margin-left: -24px; }
.tool { width: 32px; height: 32px; }
.tool svg { width: 32px; height: 32px; }
.tool.on {
  background: #5b9bd5;
  border-radius: 4px;
  border: 1px solid #444645;
}
.tool.on svg { margin: -1px; }
.sep, .sep2, .dots { flex: none; height: 16px; }
.sep { width: 4px; margin: 7px 2px 0 0; border-right: 1px solid #1c1c1c; }
.sep2 { width: 7px; margin: 8px 1px 0 0; border-right: 1px solid #1c1c1c; }
.dots { width: 5px; height: 27px; margin: 3px 3px 0 0; border-right: 2px dotted #b8822c; }

.drop {
  position: relative;
  flex: none;
  height: 18px;
  margin: 3px 1px 0;
}
.drop select {
  appearance: none;
  width: 100%;
  height: 18px;
  padding: 0 4px;
  border: 0;
  border-radius: 0;
  background: #656565;
  color: #f5d72f;
  font: 12px/18px "Liberation Sans", "Noto Sans CJK SC", sans-serif;
}
.drop::after {
  content: "";
  position: absolute;
  right: 7px;
  top: 7px;
  border: 3px solid transparent;
  border-top: 4px solid #f2c52b;
  border-bottom: 0;
}
.drop-s { width: 68px; }
.drop-l { width: 118px; }
.drop-l select { padding: 0 1px; }

/* Ribbon */
.ribbon {
  display: flex;
  align-items: center;
  height: 26px;
  overflow: hidden;
  background: #525252;
  border-top: 1px solid #6c6464;
  border-bottom: 2px solid #8d6a2a;
  box-shadow: inset 0 -4px #464646;
  color: #b4ada2;
  line-height: 20px;
  padding-bottom: 2px;
}
.tab-a { margin: 0 52px 0 -5px; }
.tab-b { margin-right: 52px; }
.tab-c { margin-right: 32px; }
.ribbon-toggle svg { width: 26px; height: 8px; }

/* Viewport */
.viewport {
  position: relative;
  flex: 1;
  overflow: hidden;
  background: linear-gradient(#161616, #313131 48%, #484848);
}
.floor {
  position: absolute;
  inset: 0;
  width: 100%;
  height: 100%;
  fill: none;
  stroke: #4b4b4b;
  shape-rendering: crispEdges;
}
.floor .axis { stroke: #000; }
.view-label {
  position: relative;
  margin: 6px 0 0 -2px;
  color: #e2e2e2;
  font: 11px/16px "Liberation Sans", "Noto Sans CJK SC", sans-serif;
}
.view-label span { margin-left: 3px; }

/* Explorer window */
.explorer {
  position: absolute;
  left: 272px;
  top: 293px;
  right: 0;
  bottom: 0;
  display: flex;
  flex-direction: column;
  background: #fff;
  color: #1a1a1a;
  box-shadow: 0 0 8px #222;
  font-family: "Noto Sans", "Noto Sans CJK SC", sans-serif;
}
.titlebar {
  display: flex;
  align-items: center;
  height: 30px;
  padding-left: 9px;
  flex: none;
}
.folder { width: 16px; height: 18px; }
.check { width: 14px; height: 17px; margin-right: 8px; }
.more { width: 8px; height: 8px; margin: 0 7px 0 6px; }
.rule { width: 1px; height: 12px; background: #9a9a9a; margin-right: 7px; }
.rule-a { margin: 0 10px 0 6px; }
.win-title { font-size: 12px; font-weight: 400; color: #999; white-space: nowrap; }

.win-tabs {
  display: flex;
  height: 27px;
  flex: none;
  border-bottom: 1px solid #dadbdc;
}
.win-tab { height: 24px; width: 53px; color: #333; }
.win-tab.file { width: 56px; height: 23px; background: #0c65ae; color: #fff; }

.nav-row {
  display: flex;
  align-items: center;
  height: 41px;
  flex: none;
  padding-left: 12px;
}
.arrow { width: 14px; height: 14px; margin-right: 16px; }
.recent { margin: 0 11px 0 -3px; }
.recent svg { width: 6px; height: 6px; }
.nav-row .plain:nth-child(4) .arrow { margin-right: 6px; }
.address {
  display: flex;
  align-items: center;
  flex: 1;
  height: 30px;
  padding-left: 3px;
  border: 1px solid #d9d9d9;
  border-right: 0;
}
.crumb { width: 6px; height: 8px; margin: 0 10px 0 6px; }

.win-body {
  display: flex;
  flex: 1;
  min-height: 0;
  padding-top: 2px;
}
.tree { width: 219px; flex: none; padding-top: 7px; }
.tree li {
  display: flex;
  align-items: center;
  gap: 4px;
  height: 24px;
  padding-left: 31px;
}
.tree li.top { padding-left: 23px; }
.tree li.quick { margin-bottom: 8px; }
.tree li.deep { padding-left: 39px; }
.tree svg { width: 18px; height: 16px; }
.scroll { width: 16px; flex: none; background: #cdcdcd; }
.scroll-up {
  display: flex;
  height: 17px;
  align-items: center;
  justify-content: center;
  background: #f0f0f0;
}
.scroll-up svg { width: 10px; height: 8px; }

.files {
  display: flex;
  flex: 1;
  margin-left: 2px;
  padding: 8px 0 0 10px;
  border-left: 1px solid #f4f4f4;
}
.files li {
  width: 115px;
  flex: none;
  text-align: center;
  line-height: 17px;
}
.thumb {
  position: relative;
  display: flex;
  align-items: center;
  justify-content: center;
  width: 96px;
  height: 96px;
  margin: 0 auto 0 9px;
}
.framed { border: 1px solid #e4e4e4; }
.doc { width: 64px; height: 86px; }
.note { width: 32px; height: 42px; }
.shortcut { position: absolute; left: 0; bottom: 0; width: 18px; height: 18px; }

.watermark {
  position: absolute;
  left: 4px;
  bottom: 9px;
  color: #d9760f;
  font-size: 24px;
  font-weight: 300;
  line-height: 34px;
  white-space: nowrap;
}
```
FILE: floor.js
```js
// Draws the perspective home grid: 14 x 14 cells seen corner-on.
const CELLS = 14;
const MIDDLE = CELLS / 2;
const HORIZON = { x: 565, y: 94 };

function project(i, j) {
  const depth = 1 - 0.0182 * (i + j);
  return [
    HORIZON.x + (32.82 * (j - i)) / depth,
    HORIZON.y + (12.254 * (i + j)) / depth,
  ];
}

function addLine(from, to, axis) {
  const line = document.createElementNS("http://www.w3.org/2000/svg", "line");
  line.setAttribute("x1", from[0]);
  line.setAttribute("y1", from[1]);
  line.setAttribute("x2", to[0]);
  line.setAttribute("y2", to[1]);
  if (axis) line.setAttribute("class", "axis");
  document.getElementById("floor").append(line);
}

for (const axis of [false, true]) {
  for (let n = 0; n <= CELLS; n++) {
    if ((n === MIDDLE) !== axis) continue;
    addLine(project(n, 0), project(n, CELLS), axis);
    addLine(project(0, n), project(CELLS, n), axis);
  }
}
```
